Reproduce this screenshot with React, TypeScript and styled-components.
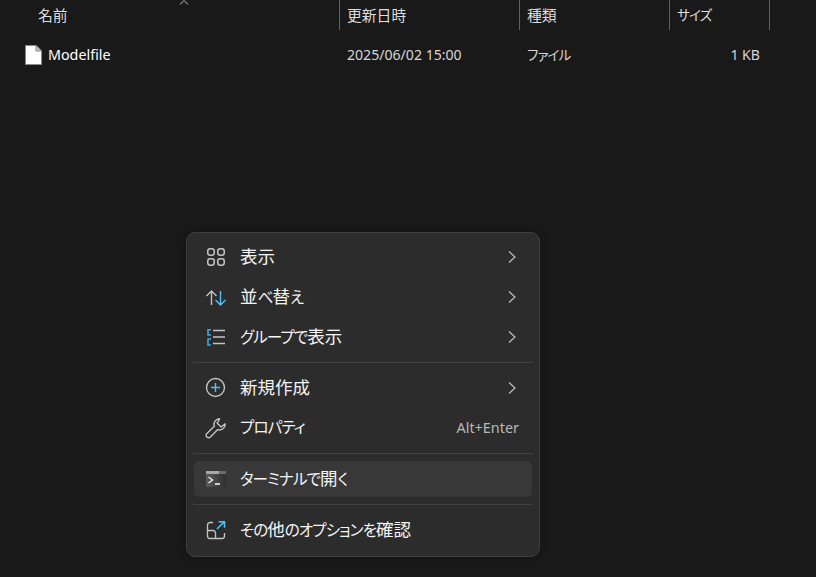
import { ReactNode } from "react";
import styled, { createGlobalStyle } from "styled-components";

const FONT = `"Noto Sans", "Noto Sans CJK JP", sans-serif`;
const BLUE = "#4cc2ff";
const GRAY = "#c4c4c4";

const GlobalStyle = createGlobalStyle`
  html, body {
    margin: 0;
    padding: 0;
    background: #191919;
    overflow: hidden;
  }
  body {
    font-family: ${FONT};
    font-feature-settings: "palt";
    color: #fff;
  }
`;

const Page = styled.div`
  position: relative;
  width: 816px;
  height: 577px;
  background: #191919;
  overflow: hidden;
`;

const Columns = styled.div`
  display: grid;
  grid-template-columns: 340px 180px 150px 100px;
  width: 770px;
`;

const HeaderRow = styled(Columns)`
  height: 30px;
`;

const HeaderCell = styled.div<{ $inset?: number }>`
  display: flex;
  align-items: center;
  height: 30px;
  padding: 0 0 2px ${(p) => p.$inset ?? 7}px;
  border-right: 1px solid #5f5f5f;
  font-size: 14.8px;
  color: #dedede;
  box-sizing: border-box;
`;

const SortCaret = styled.svg`
  position: absolute;
  left: 179px;
  top: 0;
`;

const FileRow = styled(Columns)`
  margin-top: 9px;
  height: 32px;
  align-items: center;
`;

const NameCell = styled.div`
  display: flex;
  align-items: center;
  gap: 6px;
  padding-left: 25px;
  font-size: 14.3px;
  color: #fff;
`;

const FileName = styled.span`
  padding-bottom: 2px;
`;

const FileCell = styled.div<{ $right?: boolean }>`
  padding: ${(p) => (p.$right ? "0 10px 2px 0" : "0 0 2px 7px")};
  text-align: ${(p) => (p.$right ? "right" : "left")};
  font-size: 14.1px;
  color: #d6d6d6;
`;

const SmallKana = styled.span`
  font-size: 13.6px;
  letter-spacing: -0.9px;
`;

const Menu = styled.div`
  position: absolute;
  left: 186px;
  top: 232px;
  width: 354px;
  height: 325px;
  box-sizing: border-box;
  padding: 6px 7px;
  background: #2c2c2c;
  border: 1px solid #3f3f3f;
  border-radius: 9px;
  box-shadow: 0 0 6px rgba(0, 0, 0, 0.35);
`;

const Item = styled.div<{ $active?: boolean }>`
  display: flex;
  align-items: center;
  height: 36px;
  margin-bottom: 4px;
  padding: 0 13px 0 11px;
  border-radius: 5px;
  background: ${(p) => (p.$active ? "#383838" : "transparent")};
  &:last-child {
    margin-bottom: 0;
  }
`;

const IconSlot = styled.span`
  display: flex;
  width: 22px;
  height: 22px;
  margin-right: 13px;
`;

const Label = styled.span`
  flex: 1;
  padding-bottom: 4px;
  font-size: 17.5px;
  font-weight: 400;
  color: #f4f4f4;
  white-space: nowrap;
`;

const Kana = styled.span`
  font-size: 15.6px;
  letter-spacing: -0.95px;
`;

const Shortcut = styled.span`
  padding-bottom: 1px;
  font-size: 14.4px;
  color: #b9b9b9;
`;

const ChevronBox = styled.svg`
  margin-right: 2px;
`;

const Separator = styled.div`
  height: 1px;
  margin: 7px -1px;
  background: #414141;
`;

const Chevron = () => (
  <ChevronBox width="10" height="14" viewBox="0 0 10 14" fill="none">
    <path d="M2 1.5 L8 7 L2 12.5" stroke="#bdbdbd" strokeWidth="1.2" />
  </ChevronBox>
);

const GridIcon = () => (
  <svg width="22" height="22" viewBox="0 0 22 22" fill="none" stroke={GRAY} strokeWidth="1.5">
    <rect x="2.75" y="2.75" width="6.5" height="6.5" rx="2.4" />
    <rect x="12.75" y="2.75" width="6.5" height="6.5" rx="2.4" />
    <rect x="2.75" y="12.75" width="6.5" height="6.5" rx="2.4" />
    <rect x="12.75" y="12.75" width="6.5" height="6.5" rx="2.4" />
  </svg>
);

const SortIcon = () => (
  <svg width="22" height="22" viewBox="0 0 22 22" fill="none" strokeWidth="1.4">
    <path d="M6.5 19 V5 M1.5 10 L6.5 5 L11.5 10" stroke={GRAY} />
    <path d="M15.5 5 V19 M10.5 14 L15.5 19 L20.5 14" stroke={BLUE} />
  </svg>
);

const GroupIcon = () => (
  <svg width="22" height="22" viewBox="0 0 22 22" fill="none" strokeWidth="1.6">
    <path d="M8 4.5 H20 M8 11 H20 M8 17.5 H20" stroke={GRAY} />
    <path d="M6 3.8 H3 V9 H6 M6 13 H3 V19 H6" stroke="#3fa6da" />
  </svg>
);

const PlusIcon = () => (
  <svg width="22" height="22" viewBox="0 0 22 22" fill="none" strokeWidth="1.4">
    <circle cx="10.5" cy="10.5" r="9" stroke={GRAY} />
    <path d="M10.5 6 V15 M6 10.5 H15" stroke={BLUE} />
  </svg>
);

const WrenchIcon = () => (
  <svg width="22" height="22" viewBox="0 0 22 22" fill="none" stroke={GRAY} strokeWidth="1.4" strokeLinejoin="round">
    <path d="M14.6 1.8 A5.6 5.6 0 0 0 9.3 9.2 L1.9 16.4 A2.4 2.4 0 0 0 5.4 19.9 L12.7 12.6 A5.6 5.6 0 0 0 20.1 6.9 L16.2 10 L12.2 6.2 Z" />
  </svg>
);

const TerminalIcon = () => (
  <svg width="22" height="22" viewBox="0 0 22 22" fill="none">
    <defs>
      <linearGradient id="termBody" x1="0" y1="0" x2="1" y2="0">
        <stop offset="0" stopColor="#5c5c5c" />
        <stop offset="1" stopColor="#2f2f2f" />
      </linearGradient>
    </defs>
    <rect x="1" y="3" width="20" height="16" fill="url(#termBody)" />
    <rect x="1" y="3" width="13" height="3" fill="#a8a8a8" />
    <rect x="14" y="3" width="7" height="3" fill="#6c6c6c" />
    <path d="M3.5 9 L7.5 12 L3.5 15" stroke="#e6e6e6" strokeWidth="1.5" />
    <path d="M10 16 H15" stroke="#f2f2f2" strokeWidth="1.6" />
  </svg>
);

const MoreIcon = () => (
  <svg width="22" height="22" viewBox="0 0 22 22" fill="none" strokeWidth="1.3">
    <path d="M8 3.5 H5 A2.5 2.5 0 0 0 2.5 6 V17 A2.5 2.5 0 0 0 5 19.5 H17 A2.5 2.5 0 0 0 19.5 17 V14" stroke={GRAY} />
    <path d="M2.5 11.5 H8 A2.5 2.5 0 0 1 10.5 14 V19.5" stroke={GRAY} />
    <path d="M12 10 L19 3 M13.5 2.8 H19.5 V8.8" stroke={BLUE} strokeWidth="1.6" />
  </svg>
);

const DocumentIcon = () => (
  <svg width="17" height="20" viewBox="0 0 17 20">
    <path d="M0.5 0.5 H11 L16.5 6 V19.5 H0.5 Z" fill="#fff" stroke="#8a8a8a" />
    <path d="M11 0.5 V6 H16.5 Z" fill="#c9c9c9" stroke="#8a8a8a" />
  </svg>
);

interface MenuRowProps {
  icon: ReactNode;
  children: ReactNode;
  arrow?: boolean;
  shortcut?: string;
  active?: boolean;
}

const MenuRow = ({ icon, children, arrow, shortcut, active }: MenuRowProps) => (
  <Item $active={active}>
    <IconSlot>{icon}</IconSlot>
    <Label>{children}</Label>
    {shortcut && <Shortcut>{shortcut}</Shortcut>}
    {arrow && <Chevron />}
  </Item>
);

const App = () => {
  return (
    <Page>
      <GlobalStyle />
      <HeaderRow>
        <HeaderCell $inset={38}>名前</HeaderCell>
        <HeaderCell>更新日時</HeaderCell>
        <HeaderCell>種類</HeaderCell>
        <HeaderCell>
          <SmallKana>サイズ</SmallKana>
        </HeaderCell>
      </HeaderRow>
      <SortCaret width="10" height="5" viewBox="0 0 10 5" fill="none">
        <path d="M1 4.5 L5 0.5 L9 4.5" stroke="#bdbdbd" />
      </SortCaret>
      <FileRow>
        <NameCell>
          <DocumentIcon />
          <FileName>Modelfile</FileName>
        </NameCell>
        <FileCell>2025/06/02 15:00</FileCell>
        <FileCell>
          <SmallKana>ファイル</SmallKana>
        </FileCell>
        <FileCell $right>1 KB</FileCell>
      </FileRow>
      <Menu>
        <MenuRow icon={<GridIcon />} arrow>
          表示
        </MenuRow>
        <MenuRow icon={<SortIcon />} arrow>
          並<Kana>べ</Kana>替<Kana>え</Kana>
        </MenuRow>
        <MenuRow icon={<GroupIcon />} arrow>
          <Kana>グループで</Kana>表示
        </MenuRow>
        <Separator />
        <MenuRow icon={<PlusIcon />} arrow>
          新規作成
        </MenuRow>
        <MenuRow icon={<WrenchIcon />} shortcut="Alt+Enter">
          <Kana>プロパティ</Kana>
        </MenuRow>
        <Separator />
        <MenuRow icon={<TerminalIcon />} active>
          <Kana>ターミナルで</Kana>開<Kana>く</Kana>
        </MenuRow>
        <Separator />
        <MenuRow icon={<MoreIcon />}>
          <Kana>その</Kana>他<Kana>のオプションを</Kana>確認
        </MenuRow>
      </Menu>
    </Page>
  );
};

export default App;
